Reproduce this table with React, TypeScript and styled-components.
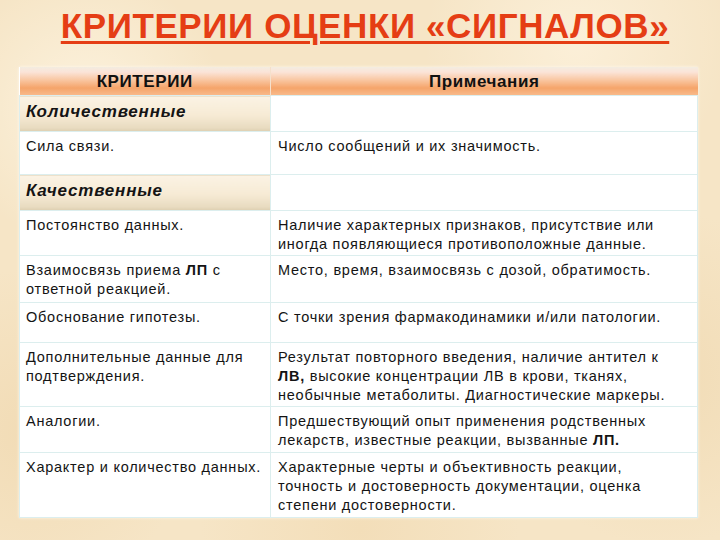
import React from "react";
import styled, { createGlobalStyle } from "styled-components";

type Row = {
  kind: "group" | "item";
  left: React.ReactNode;
  right?: React.ReactNode;
  height: number;
};

const GlobalStyle = createGlobalStyle`
  html, body {
    margin: 0;
    padding: 0;
  }
  body {
    width: 720px;
    height: 540px;
    overflow: hidden;
    font-family: "Liberation Sans", Arial, sans-serif;
    background-color: #f6e5c6;
    background-image:
      radial-gradient(circle at 12% 20%, rgba(255, 248, 232, 0.7) 0, rgba(255, 248, 232, 0) 18%),
      radial-gradient(circle at 80% 8%, rgba(255, 246, 228, 0.6) 0, rgba(255, 246, 228, 0) 20%),
      radial-gradient(circle at 92% 70%, rgba(236, 210, 165, 0.5) 0, rgba(236, 210, 165, 0) 22%),
      radial-gradient(circle at 4% 80%, rgba(238, 212, 168, 0.55) 0, rgba(238, 212, 168, 0) 20%),
      radial-gradient(circle at 50% 98%, rgba(240, 215, 172, 0.5) 0, rgba(240, 215, 172, 0) 25%);
  }
`;

const Slide = styled.div`
  display: flex;
  flex-direction: column;
  align-items: center;
  width: 720px;
  height: 540px;
  box-sizing: border-box;
  padding-top: 5px;
`;

const Title = styled.h1`
  margin: 0 0 0 10px;
  font-family: "Liberation Sans", Arial, sans-serif;
  font-weight: bold;
  font-size: 35px;
  line-height: 42px;
  color: #e53d14;
  text-decoration: underline;
  text-decoration-thickness: 3px;
  text-underline-offset: 3px;
  letter-spacing: 0.6px;
  white-space: nowrap;
`;

const Table = styled.table`
  align-self: flex-start;
  margin: 20px 0 0 19px;
  width: 678px;
  border-collapse: collapse;
  table-layout: fixed;
  background: #ffffff;
  box-shadow: 0 0 3px rgba(255, 250, 240, 0.9);
  font-size: 14.5px;
  line-height: 19px;
  letter-spacing: 0.75px;
  color: #141414;
`;

const HeadCell = styled.th`
  height: 28px;
  padding: 0;
  font-weight: bold;
  font-size: 17px;
  letter-spacing: 0.6px;
  text-align: center;
  vertical-align: middle;
  color: #111;
  background: linear-gradient(
    to bottom,
    #f3ece0 0%,
    #fbe4d8 18%,
    #f9c8a4 45%,
    #f5a46a 75%,
    #f8b98a 100%
  );
  border-right: 1px solid #f5e0cc;
  &:last-child {
    border-right: none;
  }
`;

const Cell = styled.td<{ $group?: boolean; $first?: boolean }>`
  padding: ${(p) => (p.$group ? "5px 6px 0" : p.$first ? "5px 6px 0" : "5px 7px 0")};
  vertical-align: top;
  border: 1px solid #dceeee;
  font-size: ${(p) => (p.$group ? "17px" : "14.5px")};
  line-height: ${(p) => (p.$group ? "21px" : "19px")};
  font-weight: ${(p) => (p.$group ? "bold" : "normal")};
  font-style: ${(p) => (p.$group ? "italic" : "normal")};
  letter-spacing: ${(p) => (p.$group ? "0.8px" : "0.75px")};
  background: ${(p) =>
    p.$group && p.$first
      ? "linear-gradient(to bottom, #fbf3e4 0%, #f6ead4 55%, #e8dbc0 90%, #ddceb0 100%)"
      : "#ffffff"};
`;

const Strong = styled.b`
  font-weight: bold;
`;

const rows: Row[] = [
  { kind: "group", left: "Количественные", height: 36 },
  { kind: "item", left: "Сила связи.", right: "Число сообщений и их значимость.", height: 43 },
  { kind: "group", left: "Качественные", height: 36 },
  {
    kind: "item",
    left: "Постоянство данных.",
    right: (
      <>
        Наличие характерных признаков, присутствие или
        <br />
        иногда появляющиеся противоположные данные.
      </>
    ),
    height: 45,
  },
  {
    kind: "item",
    left: (
      <>
        Взаимосвязь приема <Strong>ЛП</Strong> с
        <br />
        ответной реакцией.
      </>
    ),
    right: "Место, время, взаимосвязь с дозой, обратимость.",
    height: 47,
  },
  {
    kind: "item",
    left: "Обоснование гипотезы.",
    right: "С точки зрения фармакодинамики и/или патологии.",
    height: 40,
  },
  {
    kind: "item",
    left: (
      <>
        Дополнительные данные для
        <br />
        подтверждения.
      </>
    ),
    right: (
      <>
        Результат повторного введения, наличие антител к
        <br />
        <Strong>ЛВ,</Strong> высокие концентрации ЛВ в крови, тканях,
        <br />
        необычные метаболиты. Диагностические маркеры.
      </>
    ),
    height: 64,
  },
  {
    kind: "item",
    left: "Аналогии.",
    right: (
      <>
        Предшествующий опыт применения родственных
        <br />
        лекарств, известные реакции, вызванные <Strong>ЛП.</Strong>
      </>
    ),
    height: 46,
  },
  {
    kind: "item",
    left: "Характер и количество данных.",
    right: (
      <>
        Характерные черты и объективность реакции,
        <br />
        точность и достоверность документации, оценка
        <br />
        степени достоверности.
      </>
    ),
    height: 65,
  },
];

const App = () => {
  return (
    <>
      <GlobalStyle />
      <Slide>
        <Title>КРИТЕРИИ ОЦЕНКИ «СИГНАЛОВ»</Title>
        <Table>
          <colgroup>
            <col style={{ width: 251 }} />
            <col style={{ width: 427 }} />
          </colgroup>
          <thead>
            <tr>
              <HeadCell>КРИТЕРИИ</HeadCell>
              <HeadCell>Примечания</HeadCell>
            </tr>
          </thead>
          <tbody>
            {rows.map((r, i) => (
              <tr key={i} style={{ height: r.height }}>
                <Cell $group={r.kind === "group"} $first>
                  {r.left}
                </Cell>
                <Cell $group={r.kind === "group"}>{r.right}</Cell>
              </tr>
            ))}
          </tbody>
        </Table>
      </Slide>
    </>
  );
};

export default App;
